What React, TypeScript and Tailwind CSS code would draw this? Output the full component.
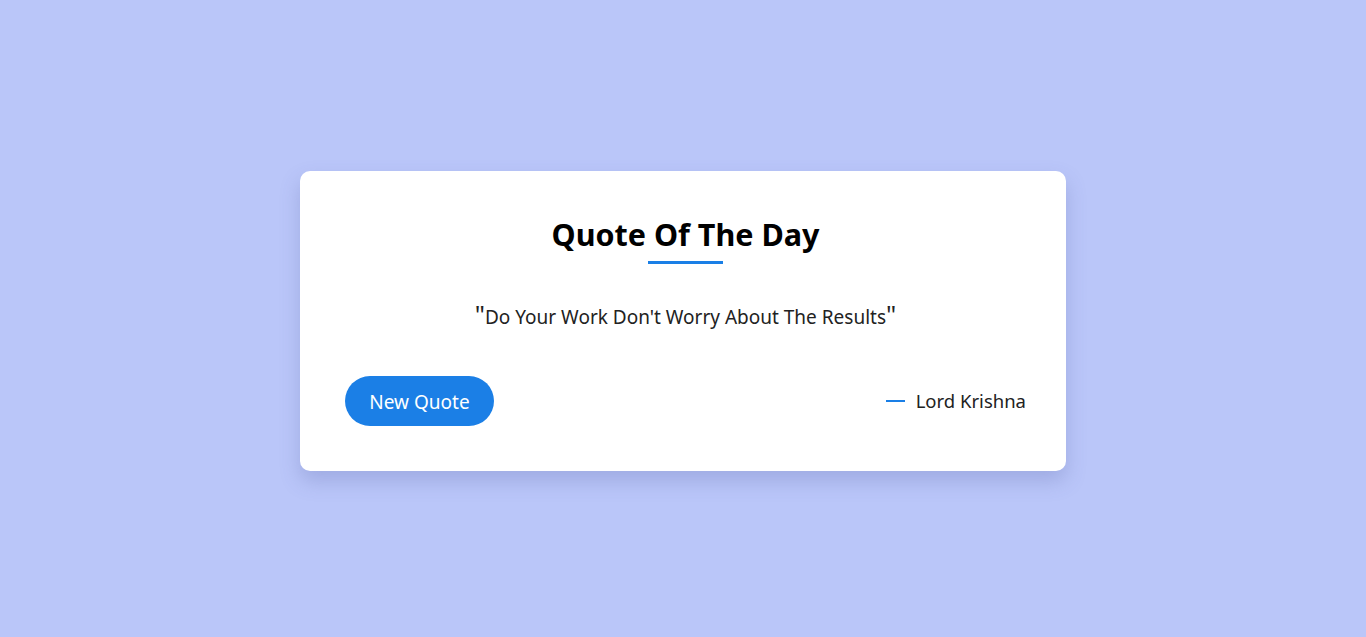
export default function App() {
  return (
    <div
      className="min-h-[637px] w-full bg-[#bac6f9] flex items-center justify-center pt-[4px]"
      style={{ fontFamily: '"Noto Sans", "Open Sans", sans-serif' }}
    >
      <div className="w-[766px] h-[300px] bg-white rounded-[10px] shadow-[0_10px_20px_rgba(80,90,160,0.25)] pl-[45px] pr-[40px] pt-[41px] flex flex-col">
        <div className="flex flex-col items-center">
          <h1 className="text-[30.5px] leading-[44px] font-bold text-black">Quote Of The Day</h1>
          <div className="w-[75px] h-[3px] bg-[#1a7fe6] mt-[5px]" />
        </div>
        <p className="mt-[40px] text-center text-[19px] leading-[26px] text-[#222]">
          <span className="text-[25px] align-top leading-[20px]">"</span>
          Do Your Work Don't Worry About The Results
          <span className="text-[25px] align-top leading-[20px]">"</span>
        </p>
        <div className="mt-[46px] flex items-center justify-between">
          <button className="w-[149px] h-[50px] rounded-full bg-[#1b7fe6] text-white text-[19px] pt-[3px]">
            New Quote
          </button>
          <div className="flex items-center gap-[11px] text-[18.5px] text-[#222] pt-[1px]">
            <span className="w-[19px] h-[2px] bg-[#1a7fe6]" />
            <span>Lord Krishna</span>
          </div>
        </div>
      </div>
    </div>
  );
}
